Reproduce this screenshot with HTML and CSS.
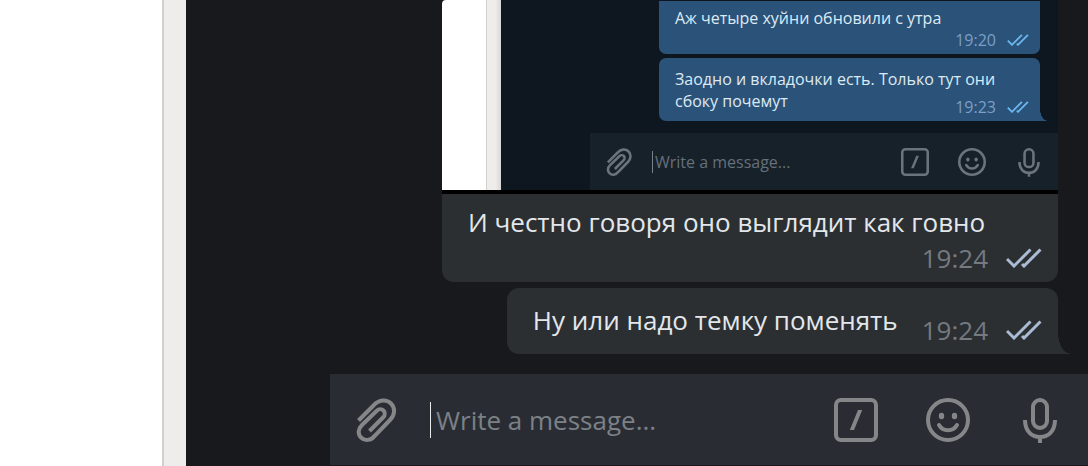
FILE: index.html
```
<!DOCTYPE html>
<html lang="ru">
<head>
    <meta charset="UTF-8">
    <meta name="viewport" content="width=device-width, initial-scale=1.0">
    <title>Chat</title>
    <link rel="stylesheet" href="styles.css">
</head>
<body>
    <!-- Icon shapes shared by both composers -->
    <svg class="sprite" aria-hidden="true">
        <symbol id="ticks" viewBox="0 0 36 20">
            <path d="M1 11l7 7L24.500 1.500M16 16l2 2L34.500 1.500"/>
        </symbol>
        <symbol id="clip" viewBox="0 0 44 44">
            <path d="M4.500 22.500L19.500 7.500C25 1.500 32.500 1 37 5.500S41 17 36 22L21 37.500C17 43 10.500 43 7 39.500S4 31 8 27L22.500 13C25 10.500 28 11 29.500 12.500S31.500 17 29 19.500L15.500 33"/>
        </symbol>
        <symbol id="slash" viewBox="0 0 44 44">
            <rect x="2" y="2" width="40" height="40" rx="5"/>
            <path class="solid" d="M24 12h4.200L20 32h-4.200z"/>
        </symbol>
        <symbol id="smile" viewBox="0 0 44 44">
            <circle cx="22" cy="22" r="20"/>
            <ellipse class="solid" cx="15.500" cy="18" rx="2.700" ry="3.200"/>
            <ellipse class="solid" cx="28.500" cy="18" rx="2.700" ry="3.200"/>
            <path d="M13 27c4 7 14 7 18 0"/>
        </symbol>
        <symbol id="mic" viewBox="0 0 44 44">
            <rect x="15" y="2" width="14" height="28" rx="7"/>
            <path d="M7 22C7 33 13.500 39 22 39s15-6 15-17M22 39v6"/>
        </symbol>
    </svg>

    <div class="app">
        <div class="side"></div>
        <div class="gutter"></div>
        <main class="chat">
            <div class="messages">
                <div class="message">
                    <div class="photo">
                        <div class="gutter small"></div>
                        <div class="inner-chat">
                            <div class="thread">
                                <div class="bubble cut">
                                    <p>Аж четыре хуйни обновили с утра</p>
                                    <div class="meta">
                                        <time>19:20</time>
                                        <svg class="ticks"><use href="#ticks"/></svg>
                                    </div>
                                </div>
                                <div class="bubble tail">
                                    <span>Заодно и вкладочки есть. Только тут они сбоку почемут</span>
                                    <div class="meta">
                                        <time>19:23</time>
                                        <svg class="ticks"><use href="#ticks"/></svg>
                                    </div>
                                </div>
                            </div>
                            <form class="composer small">
                                <button type="button" aria-label="Attach"><svg><use href="#clip"/></svg></button>
                                <input type="text" placeholder="Write a message..." aria-label="Message in photo">
                                <button type="button" aria-label="Commands"><svg><use href="#slash"/></svg></button>
                                <button type="button" aria-label="Emoji"><svg><use href="#smile"/></svg></button>
                                <button type="button" aria-label="Voice"><svg><use href="#mic"/></svg></button>
                            </form>
                        </div>
                    </div>
                    <div class="caption">
                        <p>И честно говоря оно выглядит как говно</p>
                        <div class="meta">
                            <time>19:24</time>
                            <svg class="ticks"><use href="#ticks"/></svg>
                        </div>
                    </div>
                </div>
                <div class="message inline tail">
                    <p>Ну или надо темку поменять</p>
                    <div class="meta">
                        <time>19:24</time>
                        <svg class="ticks"><use href="#ticks"/></svg>
                    </div>
                </div>
            </div>
            <form class="composer">
                <button type="button" aria-label="Attach"><svg><use href="#clip"/></svg></button>
                <input type="text" placeholder="Write a message..." aria-label="Message">
                <button type="button" aria-label="Commands"><svg><use href="#slash"/></svg></button>
                <button type="button" aria-label="Emoji"><svg><use href="#smile"/></svg></button>
                <button type="button" aria-label="Voice"><svg><use href="#mic"/></svg></button>
            </form>
        </main>
    </div>
</body>
</html>
```

FILE: styles.css
```
* {
    box-sizing: border-box;
}
body {
    margin: 0;
    font-family: "Open Sans", "Noto Sans", sans-serif;
    background: #18191c;
}
p {
    margin: 0;
}
.sprite {
    display: none;
}
.app {
    display: flex;
    min-height: 100vh;
}
.side {
    width: 162px;
    background: #fff;
}
.gutter {
    width: 24px;
    border-left: 2px solid #d1d0ce;
    background: #eeedeb;
}
.chat {
    flex: 1;
    min-width: 0;
    display: flex;
    flex-direction: column;
    border-bottom: 1px solid #1c171d;
}

/* Messages */
.messages {
    flex: 1;
    display: flex;
    flex-direction: column;
    align-items: flex-end;
    justify-content: flex-end;
    gap: 6px;
    padding: 0 30px 20px;
    font-size: 26px;
    line-height: 36px;
    color: #e3e7eb;
}
.message {
    --fill: #2b2f32;
    --tail-width: 13px;
    --tail-height: 20px;
    position: relative;
    border-radius: 12px;
    background: var(--fill);
}
.message > .photo {
    border-radius: 4px 0 0 0;
}
.inline {
    display: flex;
    gap: 24px;
    padding: 14px 16px 6px 26px;
}
.inline .meta {
    margin-top: 10px;
}
.caption {
    padding: 10px 16px 6px 26px;
}
.meta {
    display: flex;
    align-items: center;
    justify-content: flex-end;
    gap: 18px;
    color: #747a80;
}
.ticks {
    width: 36px;
    height: 20px;
    fill: none;
    stroke: #aabbd3;
    stroke-width: 3;
}
.tail {
    border-bottom-right-radius: 0;
}
.tail::after {
    content: "";
    position: absolute;
    left: 100%;
    bottom: 0;
    width: var(--tail-width);
    height: var(--tail-height);
    background: radial-gradient(ellipse 100% 100% at 100% 0, transparent 97%, var(--fill) 100%);
}

/* Photo with a chat on it */
.photo {
    display: flex;
    width: 616px;
    max-width: 100%;
    padding-left: 44px;
    overflow: hidden;
    border-bottom: 4px solid #000;
    background: #fff;
}
.gutter.small {
    width: 15px;
    border-left-width: 1px;
    background: linear-gradient(to right, #eeedeb 60%, #d8d7d6);
}
.inner-chat {
    flex: 1;
    min-width: 0;
    padding-top: 1px;
    background: #0e1620;
}
.thread {
    display: grid;
    gap: 4px;
    width: 381px;
    margin: 0 18px 12px auto;
    font-size: 16px;
    line-height: 22px;
    color: #dceaf5;
}
.bubble {
    --fill: #2b5278;
    --tail-width: 8px;
    --tail-height: 12px;
    position: relative;
    padding: 10px 11px 3px 16px;
    border-radius: 7px;
    background: var(--fill);
}
.bubble.cut {
    padding-top: 6px;
    border-top-left-radius: 0;
    border-top-right-radius: 0;
}
.bubble.tail {
    display: flow-root;
    border-bottom-right-radius: 0;
}
/* time sits beside the last line of text */
.bubble.tail .meta {
    float: right;
    margin-top: 6px;
}
.bubble .meta {
    gap: 11px;
    color: #7b9fc8;
}
.bubble .ticks {
    width: 22px;
    height: 12px;
    stroke: #6bb7f0;
}

/* Composer */
.composer {
    display: flex;
    align-items: center;
    gap: 48px;
    height: 91px;
    margin-left: 144px;
    padding: 0 26px 0 24px;
    color: #858687;
    background: #292d33;
}
.composer button {
    flex: none;
    width: 44px;
    height: 44px;
    padding: 0;
    border: none;
    color: inherit;
    background: none;
    cursor: pointer;
}
.composer svg {
    display: block;
    width: 100%;
    height: 100%;
    overflow: visible;
    fill: none;
    stroke: currentColor;
    stroke-width: 4;
}
#clip, #mic {
    overflow: visible;
}
#smile path {
    stroke-linecap: round;
}
.solid {
    fill: currentColor;
    stroke: none;
}
.composer input {
    flex: 1;
    min-width: 0;
    height: 36px;
    margin-left: -16px;
    padding: 0 0 0 5px;
    border: none;
    border-left: 1px solid #e8e9ea;
    outline: none;
    font: inherit;
    font-size: 26px;
    color: #e3e7eb;
    background: none;
}
.composer input::placeholder {
    color: #7c8188;
    opacity: 1;
}
.composer.small {
    gap: 29px;
    height: 57px;
    margin-left: 89px;
    padding: 0 15px;
    color: #6b747d;
    background: #17212a;
}
.composer.small button {
    width: 28px;
    height: 28px;
}
.composer.small input {
    height: 22px;
    margin-left: -10px;
    padding-left: 2px;
    border-left-color: #78818a;
    font-size: 16px;
}
.composer.small input::placeholder {
    color: #65707a;
}
```
